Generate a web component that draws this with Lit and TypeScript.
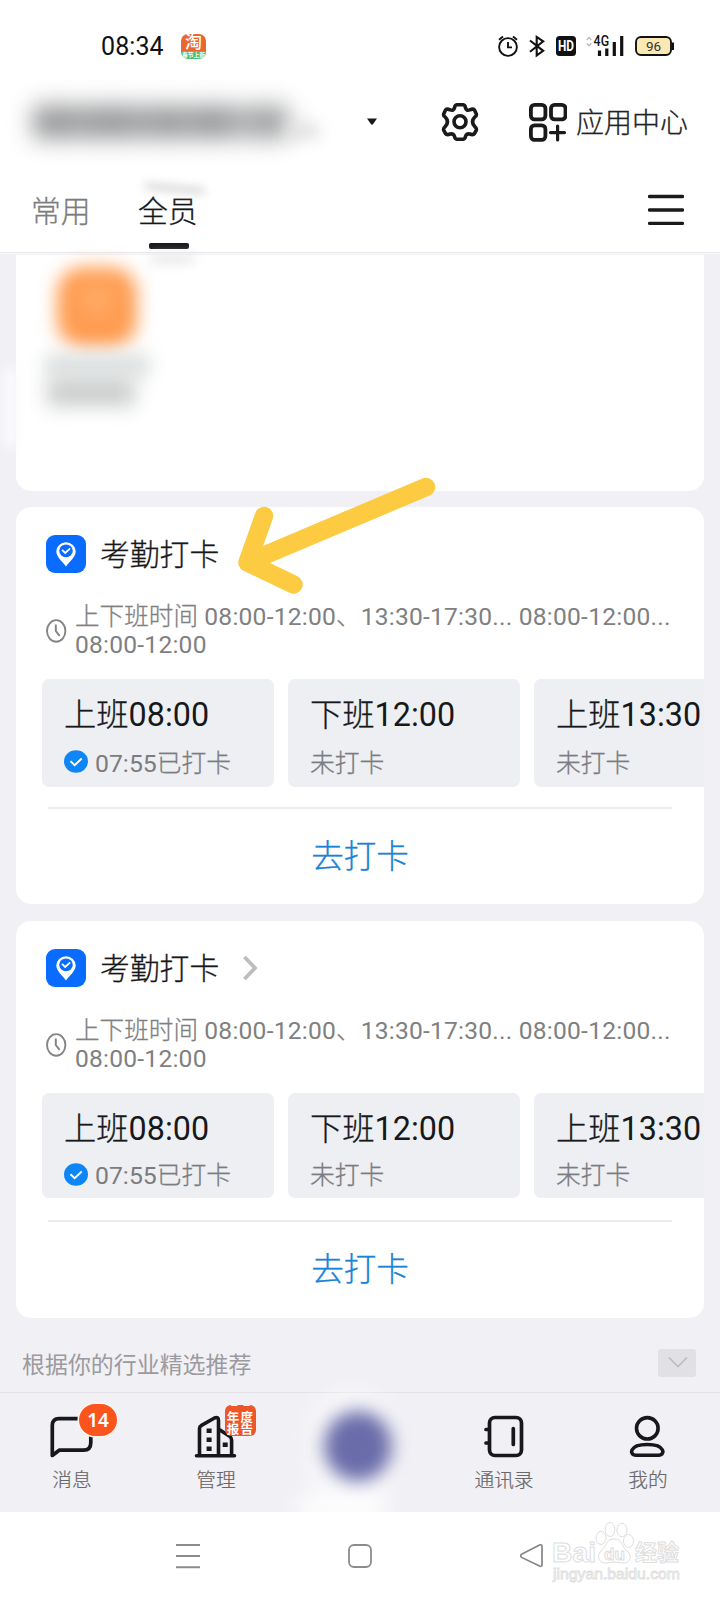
import { LitElement, html, css, nothing } from "lit";
import { customElement, property } from "lit/decorators.js";

interface Slot { label: string; time: string; checked?: string; status: string; }

const SLOTS: Slot[] = [
  { label: "上班", time: "08:00", checked: "07:55", status: "已打卡" },
  { label: "下班", time: "12:00", status: "未打卡" },
  { label: "上班", time: "13:30", status: "未打卡" },
];

@customElement("punch-card")
export class PunchCard extends LitElement {
  @property({ type: Boolean }) chevron = false;
  @property({ type: Boolean, reflect: true }) compact = false;

  static styles = css`
    :host { display: block; height: 397px; background: #fff; border-radius: 15px; overflow: hidden; box-sizing: border-box; -webkit-text-stroke: .3px currentColor; }
    b { font-weight: 400; -webkit-text-stroke: 0; }
    .head { display: flex; align-items: center; height: 38px; padding: 28px 0 0 30px; }
    .title { font-size: 29.8px; line-height: 38px; color: #17181a; margin-left: 13px; padding-top: 2px; }
    .chev { margin-left: 23px; }
    .hours { display: flex; align-items: center; margin: 30px 0 0 30px; height: 56px; }
    .text { font-size: 24.6px; line-height: 28px; color: #7f8081; margin-left: 8px; white-space: nowrap; }
    .text b { letter-spacing: .22px; }
    .slots { display: flex; gap: 14px; margin: 20px 0 0 26px; }
    .slot { flex: 0 0 232px; height: 108px; box-sizing: border-box; border-radius: 7px; background: #eeeff3; padding: 17px 0 0 22px; white-space: nowrap; }
    :host([compact]) .slot { height: 105px; }
    .when { font-size: 32.3px; line-height: 38px; color: #17181a; }
    .status { display: flex; align-items: center; gap: 7px; font-size: 24.8px; line-height: 30px; color: #7b7c7f; margin-top: 12px; }
    .status span { padding-top: 3px; margin-bottom: -3px; }
    :host([compact]) .status { margin-top: 10px; }
    :host([compact]) .status svg { position: relative; top: 1px; }
    .line { height: 2px; background: #ededee; margin: 20px 32px 0; }
    :host([compact]) .line { margin-top: 22px; height: 2px; }
    .go { text-align: center; font-size: 32.6px; line-height: 40px; color: #1a83d6; margin-top: 28px; }
  `;

  render() {
    return html`
      <div class="head">
        <svg width="41" height="38" viewBox="0 0 41 38">
          <rect width="40" height="38" rx="9" fill="#0a6cff"/>
          <path d="M20 31.5C17 27 10.3 22 10.3 16.5a9.700 9.300 0 0 1 19.400 0C29.700 22 23 27 20 31.500Z" fill="#fff"/>
          <ellipse cx="20" cy="15.800" rx="6.800" ry="6.400" fill="#0a6cff"/>
          <path d="m16 14.800 3.200 3.200 5-4.600" fill="none" stroke="#fff" stroke-width="1.800"/>
        </svg>
        <span class="title">考勤打卡</span>
        ${this.chevron ? html`<svg class="chev" width="18" height="26" viewBox="0 0 18 26"><path d="m2.500 2 10.500 11L2.500 24" fill="none" stroke="#bdbdbd" stroke-width="3.800"/></svg>` : nothing}
      </div>
      <div class="hours">
        <svg width="21" height="25" viewBox="0 0 21 25"><ellipse cx="10.200" cy="11.900" rx="9.200" ry="10.800" fill="none" stroke="#858585" stroke-width="1.900"/><path d="M9.800 5.500V12l3.800 4.800" fill="none" stroke="#858585" stroke-width="2"/></svg>
        <div class="text">上下班时间<b> 08:00-12:00</b>、<b>13:30-17:30... 08:00-12:00...</b><br><b>08:00-12:00</b></div>
      </div>
      <div class="slots">
        ${SLOTS.map((s) => html`
          <div class="slot">
            <div class="when">${s.label}<b>${s.time}</b></div>
            <div class="status">
              ${s.checked ? html`<svg width="24" height="23" viewBox="0 0 24 23"><ellipse cx="12" cy="11.500" rx="12" ry="11.200" fill="#0e86f7"/><path d="m6.500 11.200 4.200 4 7-6.700" fill="none" stroke="#fff" stroke-width="1.900"/></svg>` : nothing}
              <span><b>${s.checked ?? ""}</b>${s.status}</span>
            </div>
          </div>`)}
      </div>
      <div class="line"></div>
      <div class="go">去打卡</div>
    `;
  }
}

@customElement("app-root")
export class AppRoot extends LitElement {
  static styles = css`
    :host { display: block; position: relative; width: 720px; height: 1600px; overflow: hidden; background: #fff; font-family: Roboto, "Noto Sans CJK SC", sans-serif; font-weight: 300; }
    svg { display: block; flex: none; }
    .status { display: flex; align-items: center; height: 92px; box-sizing: border-box; padding-left: 101px; }
    .time { font-size: 25px; font-weight: 400; color: #111; width: 80px; line-height: 30px; letter-spacing: .1px; padding-top: 1px; }
    .tao { width: 25px; height: 25px; border-radius: 7px; overflow: hidden; background: linear-gradient(#e9662d 68%, #45c17c 68%); color: #fff; text-align: center; }
    .tao b { display: block; font-size: 17px; line-height: 17px; font-weight: 500; }
    .tao i { display: block; font-style: normal; font-size: 5.8px; line-height: 8px; font-weight: 700; white-space: nowrap; }
    .sys { margin-left: 291px; }
    .header { display: flex; align-items: center; height: 60px; }
    .org { width: 366px; height: 60px; display: flex; align-items: center; box-sizing: border-box; padding-left: 34px; }
    .smear { width: 254px; height: 32px; background: linear-gradient(90deg, #88898b, #9c9d9f 16%, #909294 32%, #a0a1a3 44%, #8e9092 53%, #a0a1a3 60%, #8b8d8f 72%, #b0b1b3 81%, #999b9c 92%); filter: blur(12px); }
    .dots { width: 30px; height: 14px; margin: 18px 0 0 1px; background: #ddd; filter: blur(8px); }
    .gear { margin-left: 63px; }
    .apps { margin-left: 50px; }
    .center { font-size: 28px; color: #222; margin-left: 9px; line-height: 36px; padding-top: 4px; -webkit-text-stroke: .3px currentColor; }
    .tabs { display: flex; height: 101px; box-sizing: border-box; border-bottom: 1px solid #e8e8ea; padding-left: 31px; position: relative; }
    .tab { font-size: 29.8px; line-height: 40px; margin-top: 40px; width: 60px; color: #7c7c7d; white-space: nowrap; -webkit-text-stroke: .3px currentColor; }
    .tab.on { margin-left: 47px; color: #17181a; }
    .bar { width: 40px; height: 6px; border-radius: 2px; background: #17181a; margin: 11px 0 0 11px; }
    .fringe { position: absolute; left: 145px; top: 33px; width: 60px; height: 7px; background: #d8d8d8; filter: blur(5px); transform: rotate(5deg); }
    .menu { margin: 42px 0 0 450px; }
    .feed { height: 1139px; background: #f1f0f5; padding: 1px 16px 0; box-sizing: border-box; border-top: 1px solid #fafafb; }
    .recent { height: 236px; background: #fff; border-radius: 0 0 15px 15px; margin-bottom: 16px; padding: 12px 0 0 41px; box-sizing: border-box; position: relative; }
    .app { width: 80px; height: 80px; border-radius: 26px; background: radial-gradient(circle at 50% 40%, #ffb070, #ff9c50 40%); filter: blur(9px); }
    .name1 { width: 105px; height: 22px; margin: 7px 0 0 -12px; background: #dcdfe0; filter: blur(9px); }
    .name2 { width: 88px; height: 28px; margin: 2px 0 0 -10px; background: #c9cccb; filter: blur(10px); }
    .under { position: absolute; left: 134px; top: 0; width: 44px; height: 8px; background: #e4e4e4; filter: blur(6px); }
    punch-card + punch-card { margin-top: 17px; }
    .rec { display: flex; align-items: center; justify-content: space-between; padding: 0 8px 0 6px; height: 74px; font-size: 22.95px; font-weight: 400; color: #9b9a9f; }
    .rec span { padding-top: 16px; }
    .more { margin-top: 16px; }
    .dock { display: grid; grid-template-columns: repeat(5, 144px); height: 120px; box-sizing: border-box; background: #f1f0f5; border-top: 1px solid #e2e1e6; position: relative; }
    .item { display: flex; flex-direction: column; align-items: center; padding-top: 20px; font-size: 19.700px; line-height: 28px; color: #67676a; -webkit-text-stroke: .2px currentColor; }
    .icon { width: 46px; height: 46px; position: relative; margin-bottom: 8px; -webkit-text-stroke: 0; }
    .badge { position: absolute; left: 30px; top: -9px; width: 38px; height: 32px; border-radius: 17px; background: #fb541c; color: #fff; font: 600 19px/33px "Noto Sans", sans-serif; text-align: center; box-shadow: 0 0 0 1.5px #fff6f0; }
    .report { position: absolute; left: 32px; top: -8px; width: 31px; height: 31px; border-radius: 6px; background: #ee5528; overflow: hidden; color: #fff; font-size: 12.5px; font-weight: 700; line-height: 12px; text-align: center; letter-spacing: 1.3px; text-indent: 1px; white-space: nowrap; }
    .report div { margin-top: -9px; margin-bottom: 4px; height: 12px; letter-spacing: 5px; text-indent: 5px; }
    .haze { position: absolute; left: 310px; top: -2px; width: 84px; height: 118px; border-radius: 40px; background: #fff; opacity: .6; filter: blur(10px); }
    .haze.low { left: 296px; top: 103px; width: 90px; height: 24px; opacity: .9; }
    .orb { position: absolute; left: 324px; top: 18px; width: 68px; height: 70px; border-radius: 34px; background: #696ca9; filter: blur(9px); }
    .nav { height: 88px; background: #fff; display: flex; align-items: flex-start; padding: 31px 0 0 175px; box-sizing: border-box; }
    .nav .home { margin-left: 146px; }
    .nav .back { margin-left: 147px; }
    .arrow { position: absolute; left: 230px; top: 470px; }
    .mark { position: absolute; left: 548px; top: 1518px; }
    .side { position: absolute; left: 4px; top: 368px; width: 14px; height: 80px; background: #fafaff; filter: blur(6px); }
  `;

  render() {
    return html`
      <div class="status">
        <span class="time">08:34</span>
        <span class="tao"><b>淘</b><i>春节上新</i></span>
        <svg class="sys" width="180" height="30" viewBox="497 31 180 30" fill="none" stroke="#111" stroke-width="1.900">
          <circle cx="508" cy="47" r="8.900"/><path d="M508 42v5.400h4M499 39.800l4-3.300M517 39.800l-4-3.300"/>
          <path d="m530 40.500 13.200 10.300-6.500 4.600V37l6.500 4.400L530 51.800" stroke-width="2.100"/>
          <rect x="556" y="36" width="20" height="20" rx="3.500" fill="#111" stroke="none"/>
          <text x="566" y="51" text-anchor="middle" font-size="14" font-weight="700" fill="#fff" stroke="none" textLength="16" lengthAdjust="spacingAndGlyphs">HD</text>
          <path d="m586.800 40 2.300-2.500 2.300 2.500M586.800 43.300l2.300 2.500 2.300-2.500" stroke="#bbb" stroke-width="1.400"/>
          <text x="593.600" y="46.300" font-size="13.800" font-weight="500" fill="#111" stroke="none" textLength="15.500" lengthAdjust="spacingAndGlyphs">4G</text>
          <path d="M599.500 50.500v5.400M606.800 48.500v7.400M614.300 42v13.900M621.700 36v19.900" stroke-width="3.200"/>
          <rect x="636" y="37" width="35" height="18" rx="5" fill="#fbe9b3"/><path d="M673 42.500v7.500" stroke-width="2"/>
          <text x="653.500" y="50.700" text-anchor="middle" font-size="13.500" font-weight="400" fill="#333" stroke="none">96</text>
        </svg>
      </div>
      <div class="header">
        <div class="org"><div class="smear"></div><div class="dots"></div></div>
        <svg width="12" height="8" viewBox="0 0 12 8"><path d="M1 .5h10L7.200 6q-1.200 1.400-2.400 0Z" fill="#1a1a1a"/></svg>
        <svg class="gear" width="38" height="40" viewBox="-19 -20 38 40" fill="none" stroke="#1a1a1a" stroke-width="3.600" stroke-linejoin="round">
          <path d="M-3.200-17.200h6.400Q5-17 5.400-14.500Q6.200-10.900 9.700-12.100Q13.600-13.800 14.600-11.700L16.200-8.300Q17-6.400 14.800-5Q10.300-.2 14.800 4.600Q17 6.400 16.200 8.300L14.600 11.400Q13.200 13.400 9.700 12Q6.200 11.200 5.400 14.700Q5 17 3.200 17.200h-6.400Q-5 17-5.400 14.700Q-6.200 11.200-9.700 12Q-13.200 13.400-14.600 11.400L-16.200 8.300Q-17 6.400-14.800 4.600Q-10.300-.2-14.800-5Q-17-6.400-16.200-8.300L-14.600-11.700Q-13.600-13.800-9.700-12.100Q-6.200-10.900-5.400-14.500Q-5-17-3.200-17.200Z"/>
          <circle r="6" cy="-.2"/>
        </svg>
        <svg class="apps" width="38" height="39" viewBox="0 0 38 39" fill="none" stroke="#1a1a1a" stroke-width="3.800">
          <rect x="1.900" y="1.900" width="14.500" height="14.500" rx="3.600"/><rect x="22" y="1.900" width="14.500" height="14.500" rx="3.600"/><rect x="1.900" y="22.400" width="14.500" height="14.500" rx="3.600"/>
          <path d="M28.600 23v14M21.500 29.600h14" stroke-linecap="round" stroke-width="3.200"/>
        </svg>
        <span class="center">应用中心</span>
      </div>
      <div class="tabs">
        <div class="fringe"></div>
        <div class="tab">常用</div>
        <div class="tab on">全员<div class="bar"></div></div>
        <svg class="menu" width="36" height="34" viewBox="0 0 36 34"><path d="M1.500 2.500h33M1.500 16h33M1.500 29.400h33" stroke="#1a1a1a" stroke-width="3.400" stroke-linecap="round"/></svg>
      </div>
      <div class="feed">
        <div class="recent"><div class="under"></div><div class="app"></div><div class="name1"></div><div class="name2"></div></div>
        <punch-card></punch-card>
        <punch-card chevron compact></punch-card>
        <div class="rec"><span>根据你的行业精选推荐</span>
          <svg class="more" width="38" height="28" viewBox="0 0 38 28"><rect width="38" height="28" rx="3" fill="#e1e1e5"/><path d="m11 8.500 9 9 9-9" fill="none" stroke="#bcbcc1" stroke-width="1.700"/></svg>
        </div>
      </div>
      <div class="dock">
        <div class="item"><div class="icon">
          <svg width="46" height="46" viewBox="0 0 46 46" fill="none" stroke="#17171c" stroke-width="3.700" stroke-linejoin="round"><path d="M30 5.600H10Q3.300 5.600 3.300 12.300V42.500L10.200 37.200H34.500Q41.800 37.200 41.800 29.500V22"/></svg>
          <div class="badge">14</div></div>消息</div>
        <div class="item"><div class="icon">
          <svg width="46" height="46" viewBox="0 0 46 46" fill="none" stroke="#17171c" stroke-width="3.600" stroke-linejoin="round" stroke-linecap="round"><path d="M3.500 42.700H41.500M6.500 42V15.500Q6.500 13.500 8.500 12.400L21.500 5Q25.500 3.500 25.500 7.500V42M27 17l10 6.500Q38.600 25 38.600 27V42"/><path d="M13.600 15.500h5v4.600h-5zM13.600 24.500h5v4.600h-5zM13.600 33.500h5v4.600h-5zM29.700 29.500h5v4.600h-5z" fill="#17171c" stroke="none"/></svg>
          <div class="report"><div>22</div>年度<br>报告</div></div>管理</div>
        <div class="item"></div>
        <div class="item"><div class="icon">
          <svg width="46" height="46" viewBox="0 0 46 46" fill="none" stroke="#17171c" stroke-width="3.700" stroke-linecap="round"><rect x="8.500" y="4.500" width="32" height="38" rx="5.500"/><path d="M32.300 15.500v16M5 16.500h3M5 30h3"/></svg></div>通讯录</div>
        <div class="item"><div class="icon">
          <svg width="46" height="46" viewBox="0 0 46 46" fill="none" stroke="#17171c" stroke-width="3.600"><ellipse cx="22.300" cy="15.300" rx="10.800" ry="10.700"/><path d="M11 42.200H33.500C37.500 42.200 38.500 39 37.500 37C34 29.700 10.500 29.700 7 37C6 39 7 42.200 11 42.200Z"/></svg></div>我的</div>
        <div class="haze"></div><div class="haze low"></div><div class="orb"></div>
      </div>
      <div class="nav">
        <svg width="26" height="26" viewBox="0 0 26 26"><path d="M1 2h24M1 13h24M1 24.200h24" stroke="#8c8c8c" stroke-width="1.900"/></svg>
        <svg class="home" width="26" height="26" viewBox="0 0 26 26"><rect x="2" y="2" width="22" height="22" rx="5" fill="none" stroke="#8c8c8c" stroke-width="1.800"/></svg>
        <svg class="back" width="26" height="26" viewBox="0 0 26 26"><path d="M1.600 11.200 19.500 2Q22 1.200 22 3.500V21.500Q22 24 19.500 23L1.600 14.400Q-.2 12.800 1.600 11.200Z" fill="none" stroke="#858585" stroke-width="1.700"/></svg>
      </div>
      <div class="side"></div>
      <svg class="arrow" width="220" height="130" viewBox="230 470 220 130"><path d="M426 487 247.500 562.500 264 516M247.500 562.500l46 22" fill="none" stroke="#fccb42" stroke-width="18.500" stroke-linecap="round" stroke-linejoin="round"/></svg>
      <svg class="mark" width="140" height="70" viewBox="548 1518 140 70" fill="#fff" stroke="#dedede" stroke-width="1" font-family="Liberation Sans, Noto Sans CJK SC, sans-serif">
        <ellipse cx="601" cy="1538" rx="5" ry="6.500"/><ellipse cx="610" cy="1529.500" rx="4.800" ry="7"/><ellipse cx="622" cy="1530" rx="5" ry="6.800"/><ellipse cx="628.500" cy="1541" rx="5" ry="6.500"/>
        <path d="M614 1539C605 1539 607 1547 601 1551C596 1556 599 1564 607 1563Q614 1561 622 1563C630 1564 633 1556 627 1551C621 1546 623 1539 614 1539Z"/>
        <text x="552" y="1561.500" font-size="28" font-weight="700" textLength="44" lengthAdjust="spacingAndGlyphs">Bai</text>
        <text x="604" y="1560" font-size="17" font-weight="700" textLength="21" lengthAdjust="spacingAndGlyphs">du</text>
        <text x="635" y="1560" font-size="22" font-weight="700" textLength="44" lengthAdjust="spacingAndGlyphs">经验</text>
        <text x="553" y="1579" font-size="14" textLength="127" lengthAdjust="spacingAndGlyphs" stroke-width=".8">jingyan.baidu.com</text>
      </svg>
    `;
  }
}
